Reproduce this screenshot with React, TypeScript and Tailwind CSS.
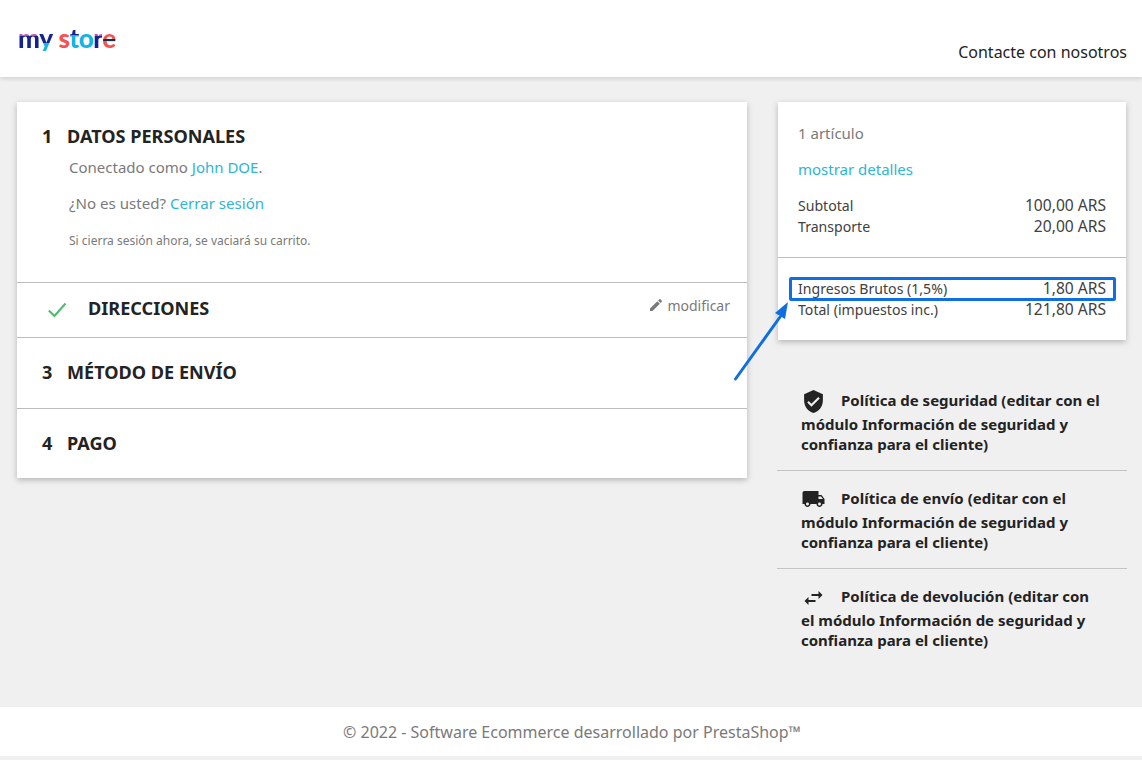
import type { ReactNode } from 'react'

const font = { fontFamily: '"Noto Sans", sans-serif' }

function Logo() {
  return (
    <div className="flex text-[26px] leading-none font-black tracking-[-0.6px] font-['Lato',sans-serif]">
      <span className="bg-[linear-gradient(180deg,#c94fa8_44%,#14238f_44%)] bg-clip-text text-transparent">m</span>
      <span className="mr-[6px] bg-[linear-gradient(180deg,#14238f_68%,#14b4e4_68%)] bg-clip-text text-transparent">y</span>
      <span className="text-[#f9504f]">s</span>
      <span className="bg-[linear-gradient(180deg,#14238f_38%,#14b4e4_38%)] bg-clip-text text-transparent">t</span>
      <span className="text-[#14b4e4]">o</span>
      <span className="bg-[linear-gradient(180deg,#c94fa8_44%,#14238f_44%)] bg-clip-text text-transparent">r</span>
      <span className="bg-[linear-gradient(180deg,#f9504f_52%,#10304f_52%,#10304f_62%,#f9504f_62%)] bg-clip-text text-transparent">e</span>
    </div>
  )
}

function Row({ label, value }: { label: string; value: string }) {
  return (
    <div className="flex h-[21px] items-center justify-between text-[14.1px] text-[#414141]">
      <span>{label}</span>
      <span className="text-[15.6px]">{value}</span>
    </div>
  )
}

function Policy({ icon, title, last }: { icon: ReactNode; title: string; last?: boolean }) {
  return (
    <div className={`h-[98px] px-6 pt-[17px] text-[15px] font-bold leading-[20px] text-[#232323] ${last ? '' : 'border-b border-[#c4c4c4]'}`}>
      <span className="inline-block h-[24px] w-[40px] align-top">{icon}</span>
      {title}
    </div>
  )
}

export default function App() {
  return (
    <div style={font} className="relative flex h-[760px] w-[1142px] flex-col overflow-hidden bg-[#f0f0f0]">
      <header className="flex h-[77px] shrink-0 justify-between bg-white pl-[18px] pr-[15px] shadow-[0_2px_4px_rgba(0,0,0,0.12)]">
        <div className="pt-[25px]"><Logo /></div>
        <span className="pt-[40px] text-[16px] text-[#232323]">Contacte con nosotros</span>
      </header>

      <main className="flex flex-1 items-start gap-[30px] pl-[17px] pt-[25px]">
        <section className="w-[730px] bg-white shadow-[0_2px_6px_rgba(0,0,0,0.25)]">
          <div className="h-[181px] border-b border-[#bdbdbd] pl-[25px] pt-[21px]">
            <div className="flex text-[18.1px] font-bold text-[#232323]">
              <span className="w-[25px]">1</span>
              <span>DATOS PERSONALES</span>
            </div>
            <p className="pl-[27px] pt-[6px] text-[15px] text-[#7a7a7a]">
              Conectado como <span className="text-[#2fb5d2]">John DOE</span>.
            </p>
            <p className="pl-[27px] pt-[13px] text-[15.1px] text-[#7a7a7a]">
              ¿No es usted? <span className="text-[#2fb5d2]">Cerrar sesión</span>
            </p>
            <p className="pl-[27px] pt-[18px] text-[12px] text-[#7a7a7a]">
              Si cierra sesión ahora, se vaciará su carrito.
            </p>
          </div>
          <div className="flex h-[55px] items-center border-b border-[#bdbdbd] pb-[3px] pl-[31px] pr-[17px]">
            <svg width="19" height="16" viewBox="0 0 19 16" fill="none" className="mt-[3px]">
              <path d="M0.8 8.5 L6.5 14 L17.5 1.5" stroke="#4cbb6c" strokeWidth="2" />
            </svg>
            <span className="ml-[21px] flex-1 text-[18.1px] font-bold text-[#232323]">DIRECCIONES</span>
            <span className="-mt-[7px] flex items-center gap-[3px] text-[14px] text-[#7a7a7a]">
              <svg width="16" height="16" viewBox="0 0 24 24" fill="#7a7a7a">
                <path d="M3 17.25V21h3.75L17.81 9.94l-3.75-3.75L3 17.25zM20.71 7.04c.39-.39.39-1.02 0-1.41l-2.34-2.34c-.39-.39-1.02-.39-1.41 0l-1.83 1.83 3.75 3.75 1.83-1.83z" />
              </svg>
              modificar
            </span>
          </div>
          <div className="flex h-[71px] items-center border-b border-[#bdbdbd] pl-[25px] text-[18.1px] font-bold text-[#232323]">
            <span className="w-[25px]">3</span>
            <span>MÉTODO DE ENVÍO</span>
          </div>
          <div className="flex h-[69px] items-center pl-[25px] text-[18.1px] font-bold text-[#232323]">
            <span className="w-[25px]">4</span>
            <span>PAGO</span>
          </div>
        </section>

        <aside className="w-[350px]">
          <div className="ml-[1px] h-[238px] w-[348px] bg-white shadow-[0_2px_6px_rgba(0,0,0,0.25)]">
            <div className="h-[156px] border-b border-[#bdbdbd] px-5 pt-[20px]">
              <p className="text-[15px] text-[#7a7a7a]">1 artículo</p>
              <p className="pt-[13px] text-[15px] text-[#2fb5d2]">mostrar detalles</p>
              <div className="pt-[15px]">
                <Row label="Subtotal" value="100,00 ARS" />
                <Row label="Transporte" value="20,00 ARS" />
              </div>
            </div>
            <div className="px-5 pt-[20px]">
              <Row label="Ingresos Brutos (1,5%)" value="1,80 ARS" />
              <Row label="Total (impuestos inc.)" value="121,80 ARS" />
            </div>
          </div>

          <div className="pt-[33px]">
            <Policy
              title="Política de seguridad (editar con el módulo Información de seguridad y confianza para el cliente)"
              icon={
                <svg width="25" height="25" viewBox="0 0 24 24" fill="#232323" className="-mt-[1px]">
                  <path d="M12 1L3 5v6c0 5.55 3.84 10.74 9 12 5.16-1.26 9-6.45 9-12V5l-9-4zm-2 16l-4-4 1.41-1.41L10 14.17l6.59-6.59L18 9l-8 8z" />
                </svg>
              }
            />
            <Policy
              title="Política de envío (editar con el módulo Información de seguridad y confianza para el cliente)"
              icon={
                <svg width="25" height="24" viewBox="0 0 24 24" fill="#232323" className="-mt-[1px]">
                  <path d="M20 8h-3V4H3c-1.1 0-2 .9-2 2v11h2c0 1.66 1.34 3 3 3s3-1.34 3-3h6c0 1.66 1.34 3 3 3s3-1.34 3-3h2v-5l-3-4zM6 18.5c-.83 0-1.5-.67-1.5-1.5s.67-1.5 1.5-1.5 1.5.67 1.5 1.5-.67 1.5-1.5 1.5zm13.5-9l1.96 2.5H17V9.5h2.5zm-1.5 9c-.83 0-1.5-.67-1.5-1.5s.67-1.5 1.5-1.5 1.5.67 1.5 1.5-.67 1.5-1.5 1.5z" />
                </svg>
              }
            />
            <Policy
              last
              title="Política de devolución (editar con el módulo Información de seguridad y confianza para el cliente)"
              icon={
                <svg width="25" height="24" viewBox="0 0 24 24" fill="#232323">
                  <path d="M6.99 11L3 15l3.99 4v-3H14v-2H6.99v-3zM21 9l-3.99-4v3H10v2h7.01v3L21 9z" />
                </svg>
              }
            />
          </div>
        </aside>
      </main>

      <footer className="mb-[4px] flex h-[49px] shrink-0 items-center justify-center bg-white pl-[2px] text-[16px] text-[#7a7a7a]">
        © 2022 - Software Ecommerce desarrollado por PrestaShop™
      </footer>

      {/* annotation over the summary */}
      <div className="absolute left-[789px] top-[277px] h-[24px] w-[327px] rounded-[2px] border-[3px] border-[#0f6fe0]" />
      <svg className="absolute left-[725px] top-[295px]" width="70" height="90" viewBox="0 0 70 90" fill="none">
        <path d="M10.5 84 L55 22" stroke="#0f6fe0" strokeWidth="3" strokeLinecap="round" />
        <path d="M63 7 L50 18 L60 24 Z" fill="#0f6fe0" />
      </svg>
    </div>
  )
}
